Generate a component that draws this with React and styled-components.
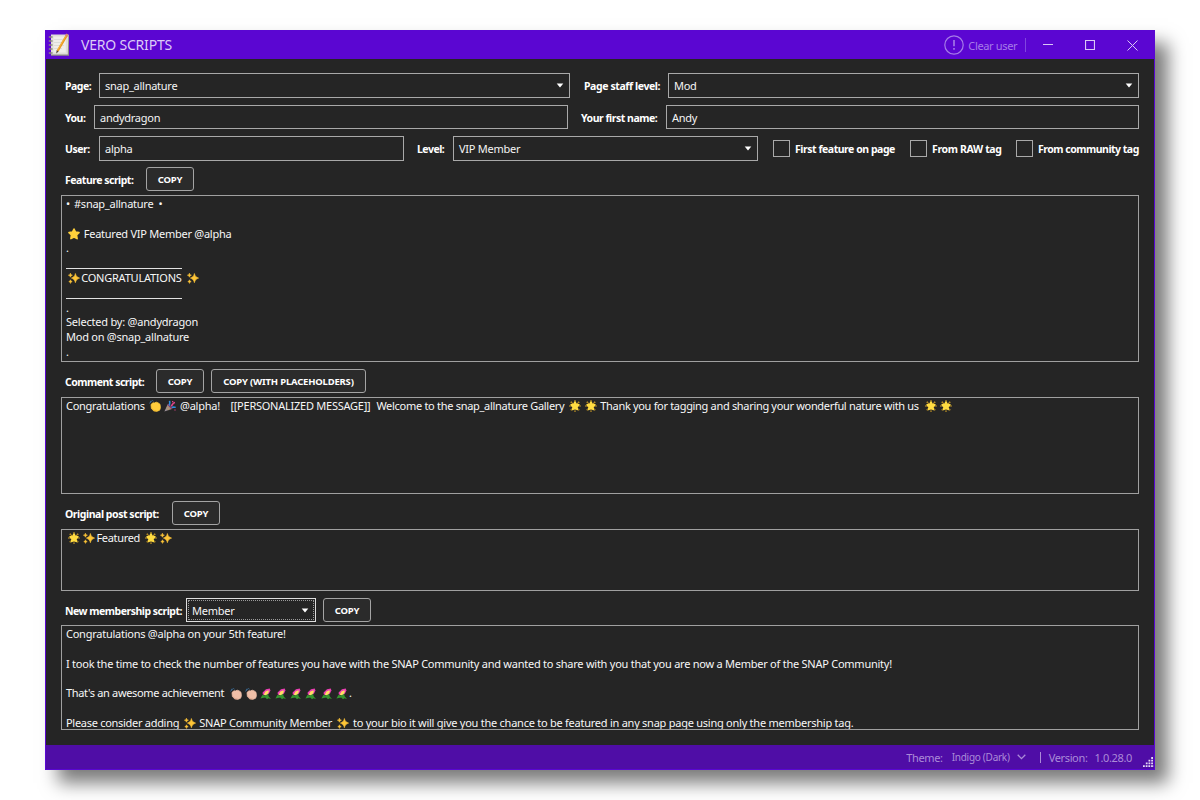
import React from 'react';
import styled, { createGlobalStyle, css } from 'styled-components';

const GlobalStyle = createGlobalStyle`
  * { box-sizing: border-box; }
  body {
    margin: 0;
    background: #fff;
    font-family: 'Noto Sans', 'Open Sans', sans-serif;
    overflow: hidden;
  }
`;

const Desktop = styled.div`
  width: 1200px;
  height: 800px;
  padding: 30px 45px;
`;

const Window = styled.main`
  width: 1110px;
  height: 740px;
  display: flex;
  flex-direction: column;
  border: 1px solid #5a07d2;
  background: #252525;
  box-shadow: 13px 13px 17px rgba(0, 0, 0, 0.52);
`;

const TitleBar = styled.header`
  height: 28px;
  flex: none;
  display: flex;
  align-items: center;
  background: #5b06d2;
  padding-left: 2px;
`;

const Title = styled.h1`
  margin: 0 auto 0 11px;
  font-size: 14px;
  font-weight: 400;
  line-height: 28px;
  letter-spacing: -0.2px;
  color: #dccbf7;
`;

const ClearUser = styled.button`
  display: flex;
  align-items: center;
  gap: 4px;
  height: 22px;
  padding: 0;
  border: 0;
  background: none;
  color: #a67ce8;
  font: 400 11px 'Noto Sans', sans-serif;
  letter-spacing: -0.35px;
`;

const TitleDivider = styled.span`
  width: 1px;
  height: 14px;
  margin-left: 8px;
  background: #8145df;
`;

const WindowButton = styled.button`
  width: 42.6px;
  height: 28px;
  display: flex;
  align-items: center;
  justify-content: center;
  padding: 0;
  border: 0;
  background: none;
  color: #d9c7f6;
`;

const Content = styled.section`
  flex: 1;
  padding: 14px 15px 0 15px;
  color: #fff;
`;

const FormRow = styled.div`
  display: flex;
  align-items: center;
  height: ${(p) => p.$height}px;
  margin-bottom: ${(p) => p.$after}px;
`;

const Label = styled.label`
  flex: none;
  width: ${(p) => p.$width}px;
  padding-left: ${(p) => p.$indent ?? 4}px;
  padding-top: 1px;
  font-size: 10.5px;
  font-weight: 700;
  line-height: 20px;
  letter-spacing: ${(p) => p.$spacing ?? -0.5}px;
  white-space: nowrap;
`;

const Spacer = styled.span`
  flex: none;
  width: ${(p) => p.$width}px;
`;

const Field = styled.div`
  flex: ${(p) => (p.$width ? 'none' : 1)};
  width: ${(p) => (p.$width ? `${p.$width}px` : 'auto')};
  height: 100%;
  display: flex;
  align-items: center;
  justify-content: space-between;
  padding: 0 5px 0 5px;
  border: 1px solid #a9a9a9;
  font-size: 11px;
  letter-spacing: -0.26px;
  color: #f5f5f5;
  ${(p) =>
    p.$focused &&
    css`
      padding-right: 6px;
      border-color: #dedede;
      outline: 1px dotted #9a9a9a;
      outline-offset: -3px;
    `}
`;

const CheckItem = styled.label`
  display: flex;
  align-items: center;
  gap: 5px;
  width: ${(p) => p.$width}px;
  font-size: 10.5px;
  font-weight: 700;
  letter-spacing: ${(p) => p.$spacing}px;
  white-space: nowrap;
`;

const CheckBox = styled.span`
  flex: none;
  width: 17px;
  height: 17px;
  border: 1px solid #a9a9a9;
`;

const ScriptHeader = styled.div`
  display: flex;
  align-items: center;
  height: 24px;
  margin-bottom: ${(p) => p.$after ?? 4}px;
`;

const CopyButton = styled.button`
  flex: none;
  width: ${(p) => p.$width ?? 48}px;
  height: 24px;
  margin-right: 7px;
  padding: 1px 0 0;
  border: 1px solid #a4a4a4;
  border-radius: 3px;
  background: #2b2b2b;
  color: #fff;
  font: 700 9.5px 'Noto Sans', sans-serif;
  letter-spacing: -0.2px;
  white-space: nowrap;
`;

const ScriptBox = styled.div`
  height: ${(p) => p.$height}px;
  margin-bottom: 7px;
  padding: 1px 4px 0;
  border: 1px solid #a0a0a0;
  overflow: hidden;
  font-size: 11px;
  letter-spacing: -0.248px;
  color: #f7f7f7;
`;

const Line = styled.div`
  display: flex;
  align-items: center;
  height: 14.8px;
  line-height: 14.8px;
  white-space: pre;
`;

const Fragment = styled.span`
  flex: none;
  width: ${(p) => (p.$width ? `${p.$width}px` : 'auto')};
  letter-spacing: ${(p) => (p.$spacing !== undefined ? `${p.$spacing}px` : 'inherit')};
`;

const Rule = styled.span`
  width: 116px;
  height: 1px;
  margin-top: 10px;
  background: #e2e2e2;
`;

const Glyph = styled.svg`
  flex: none;
  width: 12px;
  height: 12px;
  margin-left: 2px;
  margin-right: 1.2px;
`;

const StatusBar = styled.footer`
  position: relative;
  height: 24px;
  flex: none;
  display: flex;
  align-items: center;
  justify-content: flex-end;
  padding-right: 22px;
  background: #4f0da6;
  color: #ab8bd8;
  font-size: 11px;
  letter-spacing: -0.35px;
  white-space: pre;
`;

const ThemeName = styled.span`
  margin: 0 7px 0 9px;
  font-size: 10px;
  letter-spacing: -0.27px;
`;

const StatusDivider = styled.span`
  width: 1px;
  height: 11px;
  margin: 0 8px 0 14px;
  background: #ab8bd8;
`;

const Version = styled.span`
  margin-left: 7px;
`;

const Grip = styled.svg`
  position: absolute;
  right: 0;
  bottom: 0;
`;

const Arrow = () => (
  <svg width="8" height="5" viewBox="0 0 8 5">
    <path d="M0.7 0.6H7.3L4 4.4Z" fill="#fff" />
  </svg>
);

const NotebookIcon = () => (
  <svg width="22" height="24" viewBox="0 0 22 24">
    <path d="M3 2H21V22.8H3Z" fill="#8f8d86" />
    <path d="M3 1.5H20.4L19.8 21.6H3Z" fill="#dfded8" />
    <path d="M5.5 3.5H17.8V19.5H5.5Z" fill="#efeeea" />
    <path d="M6 6.5H16M6 9.5H16M6 12.5H16M6 15.5H14" stroke="#d6d7d3" strokeWidth="0.7" />
    <path d="M0.8 4H4.6M0.8 8H4.6M0.8 12H4.6M0.8 16H4.6M0.8 20H4.6" stroke="#8a8780" strokeWidth="1.5" />
    <path d="M18.6 2.6L9.6 18" stroke="#e79a20" strokeWidth="2.2" />
    <path d="M18 2.7L9.4 17.4" stroke="#f9b945" strokeWidth="0.8" />
    <path d="M19.4 1.2L18.2 3.3" stroke="#d78a72" strokeWidth="2.4" />
    <path d="M8.7 17.3L10.6 18.5L8.2 20.6Z" fill="#4c4036" />
  </svg>
);

const AlertIcon = () => (
  <svg width="20" height="20" viewBox="0 0 20 20" fill="none" stroke="currentColor">
    <circle cx="10" cy="10" r="9.2" strokeWidth="1.2" />
    <path d="M10 5V11.3M10 13V14.8" strokeWidth="1.6" />
  </svg>
);

const Star = () => (
  <Glyph viewBox="0 0 12 12">
    <path
      d="M6 1L7.5 4.1L11 4.6L8.5 7L9.1 10.6L6 9L2.9 10.6L3.5 7L1 4.6L4.5 4.1Z"
      fill="#ffd13b"
      stroke="#ffd13b"
      strokeWidth="1.6"
      strokeLinejoin="round"
    />
  </Glyph>
);

const Glow = () => (
  <Glyph viewBox="0 0 12 12">
    <path
      d="M6 0.3V11.7M0.3 6H11.7M1.8 1.8L10.2 10.2M10.2 1.8L1.8 10.2"
      stroke="#c99a24"
      strokeWidth="1.5"
      strokeDasharray="1.3 0.5"
    />
    <path
      d="M6 1.9L7.3 4.4L10 4.8L8 6.8L8.5 9.6L6 8.3L3.5 9.6L4 6.8L2 4.8L4.7 4.4Z"
      fill="#ffdc42"
      stroke="#ffdc42"
      strokeWidth="1.4"
      strokeLinejoin="round"
    />
  </Glyph>
);

const Sparkles = () => (
  <Glyph viewBox="0 0 12 12" fill="#fdc537" stroke="#fdc537" strokeWidth="0.6">
    <path d="M7.4 1.5C7.9 4.1 9.1 5.2 11.6 6.1C9.1 7 7.9 8.1 7.4 10.7C6.9 8.1 5.7 7 3.4 6.1C5.7 5.2 6.9 4.1 7.4 1.5Z" />
    <path d="M2.4 1.2L3 2.7L4.4 3.2L3 3.8L2.4 5.2L1.8 3.8L0.4 3.2L1.8 2.7Z" />
    <path d="M2.5 7.8L3 9.1L4.2 9.6L3 10.1L2.5 11.4L2 10.1L0.8 9.6L2 9.1Z" />
  </Glyph>
);

const Clap = ({ skin = '#ffcd3c', shade = '#e3a526' }) => (
  <Glyph viewBox="0 0 12 12">
    <path d="M0.4 3.2L1.8 2.2M1.2 1.4L2.8 1.2M3.4 0.4L4.4 1.2" stroke="#3f7fb5" strokeWidth="0.9" />
    <path
      d="M2 4.5L4 2.8L5.3 3L7.2 2.2L9.2 2.9L11 4.3L11.4 7.8L10.6 10.2L8 11.3L4.8 10.9L2.4 8.6Z"
      fill={skin}
      stroke={skin}
      strokeWidth="0.8"
      strokeLinejoin="round"
    />
    <path d="M2.4 8.2L5 10.6L8 11.2" fill="none" stroke={shade} strokeWidth="0.6" />
  </Glyph>
);

const Popper = () => (
  <Glyph viewBox="0 0 12 12">
    <path d="M0.4 11.4L3.6 4.6L7.8 8.9Z" fill="#9a8f96" />
    <path d="M2.4 8L5 10M3.3 6L6.4 9.2" stroke="#c9973a" strokeWidth="0.7" />
    <path d="M3.8 4.2L8 8.8" stroke="#8f3d69" strokeWidth="1.6" />
    <path d="M5.6 5.6C5 3.4 6.6 3 5.4 0.8" fill="none" stroke="#2d8fe0" strokeWidth="1.6" />
    <path d="M7.2 6.2C8.6 4.6 8.6 3 11 2.6" fill="none" stroke="#e0458c" strokeWidth="1.5" />
    <path d="M7.8 7.6C9.4 6.4 10 7.8 11.6 7" fill="none" stroke="#2d8fe0" strokeWidth="1.6" />
    <path d="M8 1H9.3V2.3H8ZM10.4 9.4H11.6V10.6H10.4Z" fill="#e0458c" />
  </Glyph>
);

const Bouquet = () => (
  <Glyph viewBox="0 0 12 12">
    <path d="M2.6 4.6L6 1.2L9.8 0.6L10.4 2.4L9 5.4L6 7.4L2.8 6.6Z" fill="#ec3fb3" />
    <path d="M3.8 6.4L5.4 3.4L8.4 2.2L8.8 3.8L7.4 6.4L5.2 7.6Z" fill="#ffe063" />
    <path d="M0.4 10.6L2.4 7L4.8 7.6L8.2 6L8.6 8.2L11 11L8.4 10.2L7 11.2L5.2 9.4Z" fill="#36962f" />
  </Glyph>
);

const PaleClap = () => <Clap skin="#f0bfa8" shade="#cf937a" />;

export default function App() {
  return (
    <Desktop>
      <GlobalStyle />
      <Window>
        <TitleBar>
          <NotebookIcon />
          <Title>VERO SCRIPTS</Title>
          <ClearUser>
            <AlertIcon />
            Clear user
          </ClearUser>
          <TitleDivider />
          <WindowButton>
            <svg width="10" height="10" viewBox="0 0 10 10" stroke="currentColor">
              <path d="M0 4.5H10" />
            </svg>
          </WindowButton>
          <WindowButton>
            <svg width="10" height="10" viewBox="0 0 10 10" fill="none" stroke="currentColor">
              <path d="M0.5 0.5H9.5V9.5H0.5Z" strokeWidth="1.2" />
            </svg>
          </WindowButton>
          <WindowButton>
            <svg width="11" height="11" viewBox="0 0 11 11" stroke="currentColor">
              <path d="M0.5 0.5L10.5 10.5M10.5 0.5L0.5 10.5" />
            </svg>
          </WindowButton>
        </TitleBar>

        <Content>
          <FormRow $height={25} $after={7}>
            <Label $width={38}>Page:</Label>
            <Field $width={471}>snap_allnature<Arrow /></Field>
            <Label $width={98} $indent={14} $spacing={-0.4}>Page staff level:</Label>
            <Field>Mod<Arrow /></Field>
          </FormRow>
          <FormRow $height={24} $after={7}>
            <Label $width={33}>You:</Label>
            <Field $width={474}>andydragon</Field>
            <Label $width={98} $indent={13} $spacing={-0.48}>Your first name:</Label>
            <Field>Andy</Field>
          </FormRow>
          <FormRow $height={25} $after={6}>
            <Label $width={38}>User:</Label>
            <Field $width={305}>alpha</Field>
            <Label $width={49} $indent={13}>Level:</Label>
            <Field $width={305}>VIP Member<Arrow /></Field>
            <Spacer $width={15} />
            <CheckItem $width={137} $spacing={-0.46}><CheckBox />First feature on page</CheckItem>
            <CheckItem $width={106} $spacing={-0.36}><CheckBox />From RAW tag</CheckItem>
            <CheckItem $width={123} $spacing={-0.5}><CheckBox />From community tag</CheckItem>
          </FormRow>

          <ScriptHeader>
            <Label $width={85}>Feature script:</Label>
            <CopyButton>COPY</CopyButton>
          </ScriptHeader>
          <ScriptBox $height={167}>
            <Line><Fragment $width={8}>• </Fragment><Fragment>#snap_allnature  •</Fragment></Line>
            <Line />
            <Line><Star /><Fragment $spacing={-0.26}> Featured VIP Member @alpha</Fragment></Line>
            <Line>.</Line>
            <Line><Rule /></Line>
            <Line><Sparkles /><Fragment $width={104} $spacing={-0.22}>CONGRATULATIONS</Fragment><Sparkles /></Line>
            <Line><Rule /></Line>
            <Line>.</Line>
            <Line><Fragment $spacing={-0.21}>Selected by: @andydragon</Fragment></Line>
            <Line>Mod on @snap_allnature</Line>
            <Line>.</Line>
          </ScriptBox>

          <ScriptHeader>
            <Label $width={95}>Comment script:</Label>
            <CopyButton>COPY</CopyButton>
            <CopyButton $width={155}>COPY (WITH PLACEHOLDERS)</CopyButton>
          </ScriptHeader>
          <ScriptBox $height={97}>
            <Line>
              <Fragment $width={81} $spacing={-0.28}>Congratulations </Fragment>
              <Clap />
              <Popper />
              <Fragment $width={53}> @alpha!</Fragment>
              <Fragment $width={146}>[[PERSONALIZED MESSAGE]]</Fragment>
              <Fragment $width={191} $spacing={-0.29}>Welcome to the snap_allnature Gallery </Fragment>
              <Glow />
              <Glow />
              <Fragment $width={325.5} $spacing={-0.32}> Thank you for tagging and sharing your wonderful nature with us </Fragment>
              <Glow />
              <Glow />
            </Line>
          </ScriptBox>

          <ScriptHeader>
            <Label $width={111} $spacing={-0.45}>Original post script:</Label>
            <CopyButton>COPY</CopyButton>
          </ScriptHeader>
          <ScriptBox $height={62}>
            <Line>
              <Glow />
              <Sparkles />
              <Fragment $width={46.5} $spacing={-0.32}>Featured </Fragment>
              <Glow />
              <Sparkles />
            </Line>
          </ScriptBox>

          <ScriptHeader $after={3}>
            <Label $width={125}>New membership script:</Label>
            <Field $width={130} $focused>Member<Arrow /></Field>
            <Spacer $width={7} />
            <CopyButton>COPY</CopyButton>
          </ScriptHeader>
          <ScriptBox $height={105}>
            <Line>Congratulations @alpha on your 5th feature!</Line>
            <Line />
            <Line>I took the time to check the number of features you have with the SNAP Community and wanted to share with you that you are now a Member of the SNAP Community!</Line>
            <Line />
            <Line>
              <Fragment $width={161.5} $spacing={-0.33}>That's an awesome achievement </Fragment>
              <PaleClap />
              <PaleClap />
              <Bouquet />
              <Bouquet />
              <Bouquet />
              <Bouquet />
              <Bouquet />
              <Bouquet />
              <Fragment>.</Fragment>
            </Line>
            <Line />
            <Line>
              <Fragment $width={115.5} $spacing={-0.29}>Please consider adding </Fragment>
              <Sparkles />
              <Fragment $width={138.5}> SNAP Community Member </Fragment>
              <Sparkles />
              <Fragment> to your bio it will give you the chance to be featured in any snap page using only the membership tag.</Fragment>
            </Line>
          </ScriptBox>
        </Content>

        <StatusBar>
          <span>Theme:</span>
          <ThemeName>Indigo (Dark)</ThemeName>
          <svg width="9" height="6" viewBox="0 0 9 6" fill="none" stroke="currentColor">
            <path d="M0.7 0.8L4.5 4.6L8.3 0.8" strokeWidth="1.3" />
          </svg>
          <StatusDivider />
          <span>Version:</span>
          <Version>1.0.28.0</Version>
          <Grip width="12" height="12" viewBox="0 0 12 12">
            <path
              d="M9.2 1h2M6.5 3.7h5M3.8 6.4h8M1 9.1h11"
              fill="none"
              stroke="#e4d9f6"
              strokeWidth="1.8"
              strokeDasharray="1.8 0.9"
            />
          </Grip>
        </StatusBar>
      </Window>
    </Desktop>
  );
}
